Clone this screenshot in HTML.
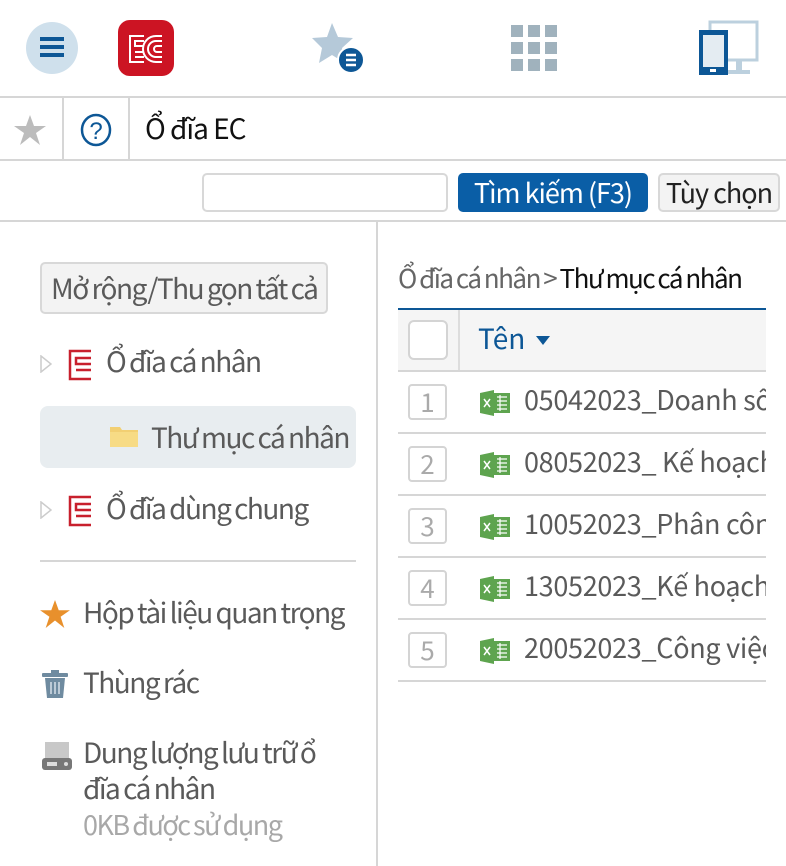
<!DOCTYPE html>
<html><head><meta charset="utf-8"><style>
*{box-sizing:border-box;margin:0;padding:0}
body{width:786px;height:866px;background:#fff;font-family:"Noto Sans CJK SC","Liberation Sans",sans-serif;position:relative;overflow:hidden;color:#555}
.a{position:absolute}
.hl{position:absolute;left:0;width:786px;height:2px;background:#d6d6d6}
.side{font-size:28px;letter-spacing:-1.5px;word-spacing:-1px;color:#5a5a5a;white-space:nowrap;line-height:1}
.row{position:absolute;left:398px;width:368px;height:62px;border-bottom:2px solid #d6d6d6}
.num{position:absolute;left:10px;top:12px;width:39px;height:36px;border:2px solid #d4d4d4;border-radius:4px;color:#aaa;font-size:26px;text-align:center;line-height:32px}
.fn{position:absolute;left:126px;top:9px;font-size:27px;color:#5a5a5a;white-space:nowrap;overflow:hidden;width:242px;line-height:36px;letter-spacing:-0.3px}
.xl{position:absolute;left:82px;top:18px}
</style></head><body>
<div class="a" style="left:26px;top:22px;width:52px;height:52px;border-radius:50%;background:#cfe0ec"></div>
<div class="a" style="left:40px;top:37px;width:24px;height:4px;background:#0d5796;box-shadow:0 8px 0 #0d5796,0 16px 0 #0d5796"></div>
<div class="a" style="left:118px;top:20px;width:56px;height:56px;border-radius:12px;background:#cc1423"></div>
<svg class="a" style="left:128px;top:34px" width="38" height="30" viewBox="0 0 38 30" fill="none" stroke="#fff" stroke-width="2">
<path d="M16 2H2V28H16M16 7H7V12H16M7 18H16M7 23H16"/><path d="M34 2H28A13 13 0 0 0 28 28H34M34 7H28A8 8 0 0 0 28 23H34M34 12H29A3 3 0 0 0 29 18H34"/></svg>
<svg class="a" style="left:312px;top:22px" width="56" height="52" viewBox="0 0 56 52">
<path d="M20 1L26 15L41 16L30 26L33 41L20 33L7 41L10 26L0 16L15 15Z" fill="#b5c9d9"/>
<circle cx="39" cy="38" r="13" fill="#0d5796" stroke="#fff" stroke-width="2"/>
<path d="M34 33H44M34 38H44M34 43H44" stroke="#fff" stroke-width="2.5"/></svg>
<svg class="a" style="left:511px;top:25px" width="46" height="46" viewBox="0 0 46 46" fill="#a0b2bd">
<rect x="0" y="0" width="12" height="12"/><rect x="17" y="0" width="12" height="12"/><rect x="34" y="0" width="12" height="12"/>
<rect x="0" y="17" width="12" height="12"/><rect x="17" y="17" width="12" height="12"/><rect x="34" y="17" width="12" height="12"/>
<rect x="0" y="34" width="12" height="12"/><rect x="17" y="34" width="12" height="12"/><rect x="34" y="34" width="12" height="12"/></svg>
<svg class="a" style="left:698px;top:20px" width="62" height="56" viewBox="0 0 62 56">
<rect x="12" y="2" width="47" height="38" fill="none" stroke="#bcd0de" stroke-width="3"/>
<rect x="38" y="40" width="6" height="12" fill="#bcd0de"/><rect x="30" y="50" width="22" height="4" fill="#bcd0de"/>
<rect x="1" y="10" width="29" height="45" fill="#0d5796"/><rect x="5" y="15" width="21" height="32" fill="#e4ecf2"/><rect x="12" y="49" width="6" height="3" fill="#fff"/></svg>
<div class="hl" style="top:96px"></div>
<div class="a" style="left:62px;top:98px;width:2px;height:62px;background:#d6d6d6"></div>
<div class="a" style="left:128px;top:98px;width:2px;height:62px;background:#d6d6d6"></div>
<svg class="a" style="left:14px;top:115px" width="32" height="30" viewBox="0 0 32 30"><path d="M16 0L20 11L32 11L22 18L26 30L16 22L6 30L10 18L0 11L12 11Z" fill="#bcbcbc"/></svg>
<svg class="a" style="left:80px;top:113px" width="32" height="34" viewBox="0 0 32 34"><ellipse cx="16" cy="17" rx="14" ry="15" fill="none" stroke="#0d5796" stroke-width="2.5"/><text x="16" y="26" font-size="24" text-anchor="middle" fill="#0d5796" font-family="Liberation Sans">?</text></svg>
<div class="a" style="left:145px;top:108px;font-size:28px;color:#111;line-height:40px;letter-spacing:-1px">Ổ đĩa EC</div>
<div class="hl" style="top:159px"></div>
<div class="a" style="left:202px;top:173px;width:246px;height:39px;border:2px solid #d8d8d8;border-radius:5px"></div>
<div class="a" style="left:458px;top:173px;width:190px;height:39px;background:#0a5ea6;border-radius:5px;color:#fff;font-size:27px;text-align:center;line-height:37px;letter-spacing:-1px">Tìm kiếm (F3)</div>
<div class="a" style="left:658px;top:173px;width:122px;height:39px;background:#f3f3f3;border:2px solid #d8d8d8;border-radius:5px;color:#222;font-size:27px;text-align:center;line-height:34px;letter-spacing:-1px;white-space:nowrap">Tùy chọn</div>
<div class="hl" style="top:220px"></div>
<div class="a" style="left:376px;top:222px;width:2px;height:644px;background:#d6d6d6"></div>
<div class="a side" style="left:40px;top:262px;width:288px;height:52px;border:2px solid #d8d8d8;border-radius:5px;background:#f3f3f3;padding-left:9px;line-height:48px">Mở rộng/Thu gọn tất cả</div>
<svg class="a" style="left:40px;top:355px" width="12" height="18"><path d="M1 1L11 9L1 17Z" fill="none" stroke="#ccc" stroke-width="1.5"/></svg>
<svg class="a" style="left:68px;top:349px" width="24" height="32" viewBox="0 0 24 32" fill="none" stroke="#c8202d" stroke-width="2.5"><path d="M23 2H2V30H23M23 9H8V15H23M8 21H23"/></svg>
<div class="a side" style="left:106px;top:347px">Ổ đĩa cá nhân</div>
<div class="a" style="left:40px;top:406px;width:316px;height:62px;background:#e8edf0;border-radius:8px"></div>
<svg class="a" style="left:110px;top:425px" width="28" height="22"><path d="M0 2H10L12 5H28V22H0Z" fill="#f2cf72"/><path d="M0 7H28V22H0Z" fill="#f7db85"/></svg>
<div class="a side" style="left:151px;top:423px">Thư mục cá nhân</div>
<svg class="a" style="left:40px;top:501px" width="12" height="18"><path d="M1 1L11 9L1 17Z" fill="none" stroke="#ccc" stroke-width="1.5"/></svg>
<svg class="a" style="left:68px;top:495px" width="24" height="32" viewBox="0 0 24 32" fill="none" stroke="#c8202d" stroke-width="2.5"><path d="M23 2H2V30H23M23 9H8V15H23M8 21H23"/></svg>
<div class="a side" style="left:106px;top:494px">Ổ đĩa dùng chung</div>
<div class="a" style="left:40px;top:560px;width:316px;height:2px;background:#d6d6d6"></div>
<svg class="a" style="left:40px;top:600px" width="30" height="28" viewBox="0 0 32 30"><path d="M16 0L20 11L32 11L22 18L26 30L16 22L6 30L10 18L0 11L12 11Z" fill="#e8902c"/></svg>
<div class="a side" style="left:83px;top:598px">Hộp tài liệu quan trọng</div>
<svg class="a" style="left:42px;top:670px" width="26" height="28"><rect x="0" y="3" width="26" height="4" rx="1" fill="#6f8ba0"/><rect x="9" y="0" width="8" height="4" fill="#6f8ba0"/><path d="M3 8H23L21 28H5Z" fill="#6f8ba0"/><path d="M9 12V24M13 12V24M17 12V24" stroke="#d6e0e8" stroke-width="1.5"/></svg>
<div class="a side" style="left:83px;top:668px">Thùng rác</div>
<svg class="a" style="left:42px;top:742px" width="30" height="28"><rect x="3" y="0" width="24" height="18" fill="#c8c8c8"/><rect x="0" y="16" width="30" height="12" rx="3" fill="#777"/><rect x="5" y="20" width="10" height="4" fill="#ddd"/><circle cx="24" cy="22" r="2" fill="#ddd"/></svg>
<div class="a side" style="left:83px;top:738px">Dung lượng lưu trữ ổ</div>
<div class="a side" style="left:83px;top:774px">đĩa cá nhân</div>
<div class="a side" style="left:83px;top:810px;color:#a8a8a8;font-size:27px">0KB được sử dụng</div>
<div class="a" style="left:398px;top:259px;font-size:26px;letter-spacing:-1.5px;word-spacing:-1px;color:#666;white-space:nowrap">Ổ đĩa cá nhân &gt; <span style="color:#111">Thư mục cá nhân</span></div>
<div class="a" style="left:398px;top:308px;width:368px;height:2px;background:#0d5796"></div>
<div class="a" style="left:398px;top:310px;width:368px;height:62px;background:#f5f5f5;border-bottom:2px solid #d6d6d6"></div>
<div class="a" style="left:408px;top:320px;width:40px;height:40px;background:#fff;border:2px solid #d4d4d4;border-radius:6px"></div>
<div class="a" style="left:458px;top:310px;width:2px;height:60px;background:#ddd"></div>
<div class="a" style="left:478px;top:318px;font-size:28px;color:#0d5796;line-height:40px">Tên</div>
<svg class="a" style="left:536px;top:336px" width="14" height="10"><path d="M0 0H14L7 9Z" fill="#0d5796"/></svg>
<div class="row" style="top:372px"><div class="num">1</div><svg class="xl" width="30" height="26"><path d="M0 3L14 0V26L0 23Z" fill="#5ea44f"/><rect x="12" y="3" width="18" height="20" fill="#5ea44f"/><path d="M4 9L10 17M10 9L4 17" stroke="#fff" stroke-width="1.5"/><path d="M17 7H27M17 11H27M17 15H27M17 19H27M20 5V21" stroke="#fff" stroke-width="1.2"/></svg><div class="fn">05042023_Doanh số</div></div>
<div class="row" style="top:434px"><div class="num">2</div><svg class="xl" width="30" height="26"><path d="M0 3L14 0V26L0 23Z" fill="#5ea44f"/><rect x="12" y="3" width="18" height="20" fill="#5ea44f"/><path d="M4 9L10 17M10 9L4 17" stroke="#fff" stroke-width="1.5"/><path d="M17 7H27M17 11H27M17 15H27M17 19H27M20 5V21" stroke="#fff" stroke-width="1.2"/></svg><div class="fn">08052023_ Kế hoạch</div></div>
<div class="row" style="top:496px"><div class="num">3</div><svg class="xl" width="30" height="26"><path d="M0 3L14 0V26L0 23Z" fill="#5ea44f"/><rect x="12" y="3" width="18" height="20" fill="#5ea44f"/><path d="M4 9L10 17M10 9L4 17" stroke="#fff" stroke-width="1.5"/><path d="M17 7H27M17 11H27M17 15H27M17 19H27M20 5V21" stroke="#fff" stroke-width="1.2"/></svg><div class="fn">10052023_Phân công</div></div>
<div class="row" style="top:558px"><div class="num">4</div><svg class="xl" width="30" height="26"><path d="M0 3L14 0V26L0 23Z" fill="#5ea44f"/><rect x="12" y="3" width="18" height="20" fill="#5ea44f"/><path d="M4 9L10 17M10 9L4 17" stroke="#fff" stroke-width="1.5"/><path d="M17 7H27M17 11H27M17 15H27M17 19H27M20 5V21" stroke="#fff" stroke-width="1.2"/></svg><div class="fn">13052023_Kế hoạch</div></div>
<div class="row" style="top:620px"><div class="num">5</div><svg class="xl" width="30" height="26"><path d="M0 3L14 0V26L0 23Z" fill="#5ea44f"/><rect x="12" y="3" width="18" height="20" fill="#5ea44f"/><path d="M4 9L10 17M10 9L4 17" stroke="#fff" stroke-width="1.5"/><path d="M17 7H27M17 11H27M17 15H27M17 19H27M20 5V21" stroke="#fff" stroke-width="1.2"/></svg><div class="fn">20052023_Công việc</div></div>
</body></html>
